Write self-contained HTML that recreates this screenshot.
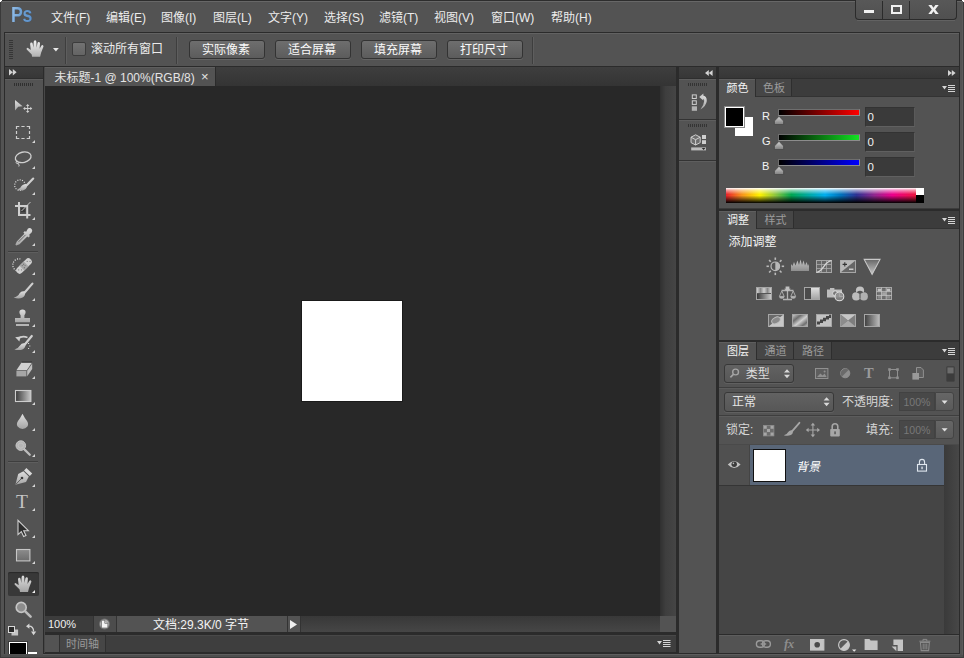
<!DOCTYPE html>
<html lang="zh-CN"><head><meta charset="utf-8"><title>Photoshop</title>
<style>
html,body{margin:0;padding:0;background:#535353;}
body{width:964px;height:658px;overflow:hidden;position:relative;font-family:"Liberation Sans","Noto Sans CJK SC",sans-serif;}
#app{position:absolute;left:0;top:0;width:964px;height:658px;overflow:hidden;background:#535353;}
#app div{position:absolute;box-sizing:border-box;}
.t{white-space:nowrap;}
svg.i{position:absolute;overflow:visible;}
</style></head><body>
<div id="app">
<div style="left:0px;top:0px;width:964px;height:658px;background:#535353;"></div>
<div style="left:0px;top:0px;width:964px;height:1px;background:#2d2d2d;"></div>
<div style="left:1px;top:1px;width:962px;height:1px;background:#676767;"></div>
<div style="left:0px;top:0px;width:1px;height:658px;background:#3a3a3a;"></div>
<div style="left:963px;top:0px;width:1px;height:658px;background:#3c3c3c;"></div>
<div style="left:962px;top:2px;width:1px;height:655px;background:#5a5a5a;"></div>
<div style="left:0px;top:657px;width:964px;height:1px;background:#3c3c3c;"></div>
<div style="left:1px;top:656px;width:962px;height:1px;background:#4c4c4c;"></div>
<div style="left:0px;top:0px;width:2px;height:1px;background:#fff;"></div>
<div style="left:0px;top:0px;width:1px;height:2px;background:#fff;"></div>
<div style="left:962px;top:0px;width:2px;height:1px;background:#fff;"></div>
<div style="left:963px;top:0px;width:1px;height:2px;background:#fff;"></div>
<div class="t" style="left:11.2px;top:1.6px;height:26px;line-height:26px;font-size:22.5px;font-weight:bold;letter-spacing:-0.3px;transform:scaleX(0.79);transform-origin:0 0;color:#74a3d3;background:linear-gradient(100deg,#9cc4ec 0%,#6fa0d2 45%,#5b8fc8 100%);-webkit-background-clip:text;background-clip:text;-webkit-text-fill-color:transparent;filter:drop-shadow(0 0 0.6px #2f4a6a);">Ps</div>
<div class="t" style="left:51px;top:9.7px;height:16px;line-height:16px;font-size:12px;color:#ececec;fill:#ececec;">文件(F)</div>
<div class="t" style="left:106px;top:9.7px;height:16px;line-height:16px;font-size:12px;color:#ececec;fill:#ececec;">编辑(E)</div>
<div class="t" style="left:161px;top:9.7px;height:16px;line-height:16px;font-size:12px;color:#ececec;fill:#ececec;">图像(I)</div>
<div class="t" style="left:213px;top:9.7px;height:16px;line-height:16px;font-size:12px;color:#ececec;fill:#ececec;">图层(L)</div>
<div class="t" style="left:268px;top:9.7px;height:16px;line-height:16px;font-size:12px;color:#ececec;fill:#ececec;">文字(Y)</div>
<div class="t" style="left:324px;top:9.7px;height:16px;line-height:16px;font-size:12px;color:#ececec;fill:#ececec;">选择(S)</div>
<div class="t" style="left:379px;top:9.7px;height:16px;line-height:16px;font-size:12px;color:#ececec;fill:#ececec;">滤镜(T)</div>
<div class="t" style="left:434px;top:9.7px;height:16px;line-height:16px;font-size:12px;color:#ececec;fill:#ececec;">视图(V)</div>
<div class="t" style="left:491px;top:9.7px;height:16px;line-height:16px;font-size:12px;color:#ececec;fill:#ececec;">窗口(W)</div>
<div class="t" style="left:551px;top:9.7px;height:16px;line-height:16px;font-size:12px;color:#ececec;fill:#ececec;">帮助(H)</div>
<div style="left:855px;top:0px;width:102px;height:20px;border:1px solid #2b2b2b;border-top:none;border-radius:0 0 4px 4px;background:linear-gradient(#585858,#505050);"></div>
<div style="left:857px;top:20px;width:98px;height:1px;background:#626262;"></div>
<div style="left:882px;top:1px;width:1px;height:18px;background:#2b2b2b;"></div>
<div style="left:909px;top:1px;width:1px;height:18px;background:#2b2b2b;"></div>
<div style="left:864px;top:10px;width:10px;height:3px;background:#f0f0f0;"></div>
<div style="left:891px;top:5px;width:11px;height:9px;border:2px solid #f0f0f0;"></div>
<svg class="i" style="left:928px;top:5px;" width="11" height="9" viewBox="0 0 11 9"><path d="M0.3 0H3.6L5.5 2.7L7.4 0H10.7L7.2 4.5L10.7 9H7.4L5.5 6.3L3.6 9H0.3L3.8 4.5Z" fill="#f0f0f0"/></svg>
<div style="left:4px;top:32px;width:956px;height:35px;border:1px solid #2b2b2b;background:#535353;"></div>
<div style="left:5px;top:33px;width:954px;height:1px;background:#626262;"></div>
<div style="left:9px;top:40px;width:4px;height:1px;background:#363636;"></div>
<div style="left:9px;top:42px;width:4px;height:1px;background:#363636;"></div>
<div style="left:9px;top:44px;width:4px;height:1px;background:#363636;"></div>
<div style="left:9px;top:46px;width:4px;height:1px;background:#363636;"></div>
<div style="left:9px;top:48px;width:4px;height:1px;background:#363636;"></div>
<div style="left:9px;top:50px;width:4px;height:1px;background:#363636;"></div>
<div style="left:9px;top:52px;width:4px;height:1px;background:#363636;"></div>
<div style="left:9px;top:54px;width:4px;height:1px;background:#363636;"></div>
<div style="left:9px;top:56px;width:4px;height:1px;background:#363636;"></div>
<div style="left:9px;top:58px;width:4px;height:1px;background:#363636;"></div>
<div style="left:65px;top:37px;width:1px;height:27px;background:#3e3e3e;"></div>
<div style="left:66px;top:37px;width:1px;height:27px;background:#5e5e5e;"></div>
<svg class="i" style="left:52.6px;top:48px;" width="6" height="4" viewBox="0 0 6 4"><path d="M0 0H5.8L2.9 3.4Z" fill="#e8e8e8"/></svg>
<div style="left:72px;top:42px;width:14px;height:14px;border:1px solid #3c3c3c;border-radius:2px;background:linear-gradient(#727272,#646464);"></div>
<div class="t" style="left:91px;top:41px;height:16px;line-height:16px;font-size:12px;color:#ececec;fill:#ececec;">滚动所有窗口</div>
<div style="left:176px;top:37px;width:1px;height:27px;background:#3e3e3e;"></div>
<div style="left:177px;top:37px;width:1px;height:27px;background:#5e5e5e;"></div>
<div style="left:189px;top:40px;width:76px;height:19px;border:1px solid #333;border-radius:3px;background:linear-gradient(#6e6e6e,#5c5c5c);box-shadow:0 1px 0 #636363;"></div>
<div class="t" style="left:188px;top:41.5px;height:16px;line-height:16px;font-size:12px;color:#fafafa;fill:#fafafa;width:76px;text-align:center;">实际像素</div>
<div style="left:275px;top:40px;width:76px;height:19px;border:1px solid #333;border-radius:3px;background:linear-gradient(#6e6e6e,#5c5c5c);box-shadow:0 1px 0 #636363;"></div>
<div class="t" style="left:274px;top:41.5px;height:16px;line-height:16px;font-size:12px;color:#fafafa;fill:#fafafa;width:76px;text-align:center;">适合屏幕</div>
<div style="left:361px;top:40px;width:76px;height:19px;border:1px solid #333;border-radius:3px;background:linear-gradient(#6e6e6e,#5c5c5c);box-shadow:0 1px 0 #636363;"></div>
<div class="t" style="left:360px;top:41.5px;height:16px;line-height:16px;font-size:12px;color:#fafafa;fill:#fafafa;width:76px;text-align:center;">填充屏幕</div>
<div style="left:447px;top:40px;width:76px;height:19px;border:1px solid #333;border-radius:3px;background:linear-gradient(#6e6e6e,#5c5c5c);box-shadow:0 1px 0 #636363;"></div>
<div class="t" style="left:446px;top:41.5px;height:16px;line-height:16px;font-size:12px;color:#fafafa;fill:#fafafa;width:76px;text-align:center;">打印尺寸</div>
<div style="left:532px;top:37px;width:1px;height:27px;background:#3e3e3e;"></div>
<div style="left:533px;top:37px;width:1px;height:27px;background:#5e5e5e;"></div>
<div style="left:4px;top:67px;width:1px;height:587px;background:#2b2b2b;"></div>
<div style="left:5px;top:67px;width:38px;height:12px;background:linear-gradient(#3e3e3e,#363636);"></div>
<div style="left:5px;top:78px;width:38px;height:1px;background:#2e2e2e;"></div>
<div style="left:5px;top:79px;width:38px;height:1px;background:#5e5e5e;"></div>
<svg class="i" style="left:9px;top:69.3px;" width="8" height="7" viewBox="0 0 8 7"><path d="M0 0L3.8 3.2L0 6.4ZM3.8 0L7.6 3.2L3.8 6.4Z" fill="#d4d4d4"/></svg>
<div style="left:14px;top:83px;width:1px;height:3px;background:#303030;"></div>
<div style="left:16px;top:83px;width:1px;height:3px;background:#303030;"></div>
<div style="left:18px;top:83px;width:1px;height:3px;background:#303030;"></div>
<div style="left:20px;top:83px;width:1px;height:3px;background:#303030;"></div>
<div style="left:22px;top:83px;width:1px;height:3px;background:#303030;"></div>
<div style="left:24px;top:83px;width:1px;height:3px;background:#303030;"></div>
<div style="left:26px;top:83px;width:1px;height:3px;background:#303030;"></div>
<div style="left:28px;top:83px;width:1px;height:3px;background:#303030;"></div>
<div style="left:30px;top:83px;width:1px;height:3px;background:#303030;"></div>
<div style="left:32px;top:83px;width:1px;height:3px;background:#303030;"></div>
<div style="left:43px;top:67px;width:1px;height:587px;background:#2b2b2b;"></div>
<div style="left:44px;top:67px;width:1px;height:587px;background:#484848;"></div>
<div style="left:8px;top:251px;width:30px;height:1px;background:#3e3e3e;"></div>
<div style="left:8px;top:252px;width:30px;height:1px;background:#5e5e5e;"></div>
<div style="left:8px;top:461px;width:30px;height:1px;background:#3e3e3e;"></div>
<div style="left:8px;top:462px;width:30px;height:1px;background:#5e5e5e;"></div>
<div style="left:8px;top:572px;width:31px;height:24px;background:#383838;border-radius:2px;box-shadow:inset 0 1px 1px #2a2a2a;"></div>
<div class="t" style="left:16px;top:491px;height:22px;line-height:22px;font-size:19.5px;color:#c4c4c4;font-family:'Liberation Serif',serif;">T</div>
<div style="left:28px;top:652px;width:9px;height:2px;background:#fff;"></div>
<div style="left:8px;top:641px;width:20px;height:13px;background:#3a3a3a;"></div>
<div style="left:9px;top:642px;width:18px;height:12px;background:#fff;"></div>
<div style="left:10px;top:643px;width:16px;height:11px;background:#000;"></div>
<div style="left:45px;top:67px;width:631px;height:19px;background:linear-gradient(#3e3e3e,#343434);"></div>
<div style="left:45px;top:67px;width:171px;height:19px;background:#535353;border-right:1px solid #2b2b2b;"></div>
<div style="left:45px;top:67px;width:170px;height:1px;background:#5e5e5e;"></div>
<div class="t" style="left:54.5px;top:69.9px;height:16px;line-height:16px;font-size:12px;color:#e4e4e4;fill:#e4e4e4;">未标题-1 @ 100%(RGB/8)</div>
<div class="t" style="left:201px;top:68.6px;height:16px;line-height:16px;font-size:13px;color:#e4e4e4;fill:#e4e4e4;">×</div>
<div style="left:45px;top:86px;width:615px;height:530px;background:#282828;"></div>
<div style="left:660px;top:86px;width:16px;height:530px;background:linear-gradient(90deg,#303030,#3e3e3e 35%,#454545);"></div>
<div style="left:660px;top:616px;width:16px;height:16px;background:#535353;"></div>
<div style="left:301px;top:300px;width:102px;height:102px;background:#1a1a1a;"></div>
<div style="left:302px;top:301px;width:100px;height:100px;background:#fff;"></div>
<div style="left:45px;top:616px;width:615px;height:16px;background:linear-gradient(#383838,#464646);"></div>
<div style="left:45px;top:616px;width:48px;height:16px;background:#3c3c3c;"></div>
<div class="t" style="left:48px;top:616px;height:16px;line-height:16px;font-size:11px;color:#f0f0f0;fill:#f0f0f0;">100%</div>
<div style="left:93px;top:616px;width:24px;height:16px;background:#4c4c4c;border-left:1px solid #333;border-right:1px solid #333;"></div>
<div style="left:117px;top:616px;width:170px;height:16px;background:#535353;"></div>
<div class="t" style="left:153px;top:616.9px;height:16px;line-height:16px;font-size:12px;color:#f4f4f4;fill:#f4f4f4;">文档:29.3K/0 字节</div>
<div style="left:287px;top:616px;width:14px;height:16px;background:#535353;border-left:1px solid #333;border-right:1px solid #333;"></div>
<svg class="i" style="left:290px;top:620px;" width="7" height="9" viewBox="0 0 7 9"><path d="M0 0L7 4.5L0 9Z" fill="#eee"/></svg>
<div style="left:676px;top:67px;width:3px;height:587px;background:#2b2b2b;"></div>
<div style="left:45px;top:632px;width:631px;height:3px;background:#2b2b2b;"></div>
<div style="left:45px;top:635px;width:631px;height:17px;background:#3e3e3e;"></div>
<div style="left:45px;top:635px;width:631px;height:1px;background:#484848;"></div>
<div style="left:45px;top:635px;width:14px;height:17px;background:#535353;"></div>
<div style="left:59px;top:635px;width:47px;height:17px;background:#464646;border-left:1px solid #303030;border-right:1px solid #303030;"></div>
<div class="t" style="left:66px;top:635.5px;height:16px;line-height:16px;font-size:11px;color:#9a9a9a;fill:#9a9a9a;">时间轴</div>
<svg class="i" style="left:657.4px;top:639.6px;" width="13" height="7" viewBox="0 0 13 7"><path d="M0 1H5L2.5 4.5ZM6 0H13.5V1H6ZM6 2H13.5V3H6ZM6 4H13.5V5H6ZM6 6H13.5V7H6Z" fill="#d4d4d4"/></svg>
<div style="left:45px;top:652px;width:631px;height:1px;background:#2b2b2b;"></div>
<div style="left:43px;top:653px;width:917px;height:1px;background:#2b2b2b;"></div>
<div style="left:43px;top:654px;width:917px;height:1px;background:#5e5e5e;"></div>
<div style="left:1px;top:655px;width:962px;height:2px;background:#4e4e4e;"></div>
<div style="left:679px;top:67px;width:37px;height:12px;background:linear-gradient(#3e3e3e,#363636);"></div>
<div style="left:679px;top:78px;width:37px;height:1px;background:#2e2e2e;"></div>
<svg class="i" style="left:704.8px;top:69.6px;" width="8" height="7" viewBox="0 0 8 7"><path d="M3.8 0L0 3L3.8 6ZM7.6 0L3.8 3L7.6 6Z" fill="#d4d4d4"/></svg>
<div style="left:679px;top:79px;width:37px;height:574px;background:#535353;"></div>
<div style="left:679px;top:79px;width:37px;height:1px;background:#5e5e5e;"></div>
<div style="left:679px;top:119px;width:37px;height:1px;background:#333;"></div>
<div style="left:679px;top:120px;width:37px;height:1px;background:#5e5e5e;"></div>
<div style="left:679px;top:160px;width:37px;height:1px;background:#333;"></div>
<div style="left:679px;top:161px;width:37px;height:1px;background:#5e5e5e;"></div>
<div style="left:688px;top:83px;width:1px;height:3px;background:#343434;"></div>
<div style="left:690px;top:83px;width:1px;height:3px;background:#343434;"></div>
<div style="left:692px;top:83px;width:1px;height:3px;background:#343434;"></div>
<div style="left:694px;top:83px;width:1px;height:3px;background:#343434;"></div>
<div style="left:696px;top:83px;width:1px;height:3px;background:#343434;"></div>
<div style="left:698px;top:83px;width:1px;height:3px;background:#343434;"></div>
<div style="left:700px;top:83px;width:1px;height:3px;background:#343434;"></div>
<div style="left:702px;top:83px;width:1px;height:3px;background:#343434;"></div>
<div style="left:704px;top:83px;width:1px;height:3px;background:#343434;"></div>
<div style="left:706px;top:83px;width:1px;height:3px;background:#343434;"></div>
<div style="left:688px;top:124px;width:1px;height:3px;background:#343434;"></div>
<div style="left:690px;top:124px;width:1px;height:3px;background:#343434;"></div>
<div style="left:692px;top:124px;width:1px;height:3px;background:#343434;"></div>
<div style="left:694px;top:124px;width:1px;height:3px;background:#343434;"></div>
<div style="left:696px;top:124px;width:1px;height:3px;background:#343434;"></div>
<div style="left:698px;top:124px;width:1px;height:3px;background:#343434;"></div>
<div style="left:700px;top:124px;width:1px;height:3px;background:#343434;"></div>
<div style="left:702px;top:124px;width:1px;height:3px;background:#343434;"></div>
<div style="left:704px;top:124px;width:1px;height:3px;background:#343434;"></div>
<div style="left:706px;top:124px;width:1px;height:3px;background:#343434;"></div>
<div style="left:716px;top:67px;width:3px;height:587px;background:#2b2b2b;"></div>
<div style="left:719px;top:67px;width:240px;height:12px;background:linear-gradient(#3e3e3e,#363636);"></div>
<div style="left:719px;top:78px;width:240px;height:1px;background:#2e2e2e;"></div>
<svg class="i" style="left:947.6px;top:69.6px;" width="8" height="7" viewBox="0 0 8 7"><path d="M0 0L3.8 3L0 6ZM3.8 0L7.6 3L3.8 6Z" fill="#d4d4d4"/></svg>
<div style="left:959px;top:67px;width:1px;height:587px;background:#2b2b2b;"></div>
<div style="left:719px;top:79px;width:240px;height:18px;background:#3c3c3c;"></div>
<div style="left:719px;top:96px;width:240px;height:1px;background:#333;"></div>
<div style="left:719px;top:79px;width:37px;height:18px;background:#535353;border-right:1px solid #2e2e2e;"></div>
<div style="left:719px;top:79px;width:36px;height:1px;background:#5e5e5e;"></div>
<div class="t" style="left:719px;top:80.2px;height:16px;line-height:16px;font-size:11px;color:#f4f4f4;fill:#f4f4f4;width:37px;text-align:center;">颜色</div>
<div style="left:756px;top:79px;width:36px;height:17px;background:#464646;border-right:1px solid #2e2e2e;"></div>
<div class="t" style="left:756px;top:80.2px;height:16px;line-height:16px;font-size:11px;color:#9c9c9c;fill:#9c9c9c;width:36px;text-align:center;">色板</div>
<svg class="i" style="left:942px;top:85px;" width="13" height="7" viewBox="0 0 13 7"><path d="M0 1H5L2.5 4.5ZM6 0H13V1H6ZM6 2H13V3H6ZM6 4H13V5H6ZM6 6H13V7H6Z" fill="#d4d4d4"/></svg>
<div style="left:719px;top:97px;width:240px;height:112px;background:#535353;"></div>
<div style="left:735px;top:117px;width:18px;height:19px;background:#fff;"></div>
<div style="left:724px;top:106px;width:21px;height:22px;border:1px solid #8a8a8a;background:#fff;"></div>
<div style="left:726px;top:108px;width:17px;height:18px;background:#000;"></div>
<div class="t" style="left:762px;top:107.6px;height:16px;line-height:16px;font-size:11px;color:#f4f4f4;fill:#f4f4f4;">R</div>
<div style="left:778px;top:108.6px;width:81.6px;height:7px;border:1px solid #8c8c8c;border-top-color:#6e6e6e;border-left-color:#6e6e6e;background:linear-gradient(90deg,#000,#f00);"></div>
<svg class="i" style="left:774px;top:115.7px;" width="10" height="9" viewBox="0 0 10 9"><path d="M5 0.3L9.6 5V8.5H0.4V5Z" fill="url(#ig2)" stroke="#484848" stroke-width="0.8"/></svg>
<div style="left:865px;top:107px;width:50px;height:20px;background:#3a3a3a;border:1px solid #333;border-bottom-color:#606060;border-right-color:#5a5a5a;"></div>
<div class="t" style="left:867.6px;top:109.3px;height:16px;line-height:16px;font-size:11.5px;color:#f2f2f2;fill:#f2f2f2;">0</div>
<div class="t" style="left:762px;top:132.6px;height:16px;line-height:16px;font-size:11px;color:#f4f4f4;fill:#f4f4f4;">G</div>
<div style="left:778px;top:133.6px;width:81.6px;height:7px;border:1px solid #8c8c8c;border-top-color:#6e6e6e;border-left-color:#6e6e6e;background:linear-gradient(90deg,#000,#12e222);"></div>
<svg class="i" style="left:774px;top:140.7px;" width="10" height="9" viewBox="0 0 10 9"><path d="M5 0.3L9.6 5V8.5H0.4V5Z" fill="url(#ig2)" stroke="#484848" stroke-width="0.8"/></svg>
<div style="left:865px;top:132px;width:50px;height:20px;background:#3a3a3a;border:1px solid #333;border-bottom-color:#606060;border-right-color:#5a5a5a;"></div>
<div class="t" style="left:867.6px;top:134.3px;height:16px;line-height:16px;font-size:11.5px;color:#f2f2f2;fill:#f2f2f2;">0</div>
<div class="t" style="left:762px;top:157.6px;height:16px;line-height:16px;font-size:11px;color:#f4f4f4;fill:#f4f4f4;">B</div>
<div style="left:778px;top:158.6px;width:81.6px;height:7px;border:1px solid #8c8c8c;border-top-color:#6e6e6e;border-left-color:#6e6e6e;background:linear-gradient(90deg,#000,#00f);"></div>
<svg class="i" style="left:774px;top:165.7px;" width="10" height="9" viewBox="0 0 10 9"><path d="M5 0.3L9.6 5V8.5H0.4V5Z" fill="url(#ig2)" stroke="#484848" stroke-width="0.8"/></svg>
<div style="left:865px;top:157px;width:50px;height:20px;background:#3a3a3a;border:1px solid #333;border-bottom-color:#606060;border-right-color:#5a5a5a;"></div>
<div class="t" style="left:867.6px;top:159.3px;height:16px;line-height:16px;font-size:11.5px;color:#f2f2f2;fill:#f2f2f2;">0</div>
<div style="left:726px;top:188px;width:198px;height:15px;background:linear-gradient(180deg,#fff 0%,rgba(255,255,255,.55) 14%,rgba(255,255,255,0) 42%,rgba(0,0,0,0) 50%,rgba(0,0,0,.6) 80%,#000 100%),linear-gradient(90deg,#e8202a 0%,#f7941d 8%,#fff200 17%,#8dc63f 25%,#00a651 33%,#00a99d 41%,#00aeef 50%,#0072bc 58%,#2e3192 66%,#92278f 75%,#ec008c 84%,#ed1c24 100%);"></div>
<div style="left:916px;top:188px;width:8px;height:7px;background:#fff;"></div>
<div style="left:916px;top:195px;width:8px;height:8px;background:#000;"></div>
<div style="left:719px;top:208px;width:240px;height:1px;background:#3c3c3c;"></div>
<div style="left:719px;top:209px;width:240px;height:2px;background:#2b2b2b;"></div>
<div style="left:719px;top:211px;width:240px;height:18px;background:#3c3c3c;"></div>
<div style="left:719px;top:228px;width:240px;height:1px;background:#333;"></div>
<div style="left:719px;top:211px;width:38px;height:18px;background:#535353;border-right:1px solid #2e2e2e;"></div>
<div style="left:719px;top:211px;width:37px;height:1px;background:#5e5e5e;"></div>
<div class="t" style="left:719px;top:212.2px;height:16px;line-height:16px;font-size:11px;color:#f4f4f4;fill:#f4f4f4;width:38px;text-align:center;">调整</div>
<div style="left:757px;top:211px;width:37px;height:17px;background:#464646;border-right:1px solid #2e2e2e;"></div>
<div class="t" style="left:757px;top:212.2px;height:16px;line-height:16px;font-size:11px;color:#9c9c9c;fill:#9c9c9c;width:37px;text-align:center;">样式</div>
<svg class="i" style="left:942px;top:217px;" width="13" height="7" viewBox="0 0 13 7"><path d="M0 1H5L2.5 4.5ZM6 0H13V1H6ZM6 2H13V3H6ZM6 4H13V5H6ZM6 6H13V7H6Z" fill="#d4d4d4"/></svg>
<div style="left:719px;top:229px;width:240px;height:111px;background:#535353;"></div>
<div class="t" style="left:728.5px;top:233.8px;height:16px;line-height:16px;font-size:12px;color:#f4f4f4;fill:#f4f4f4;">添加调整</div>
<div style="left:719px;top:340px;width:240px;height:2px;background:#2b2b2b;"></div>
<div style="left:719px;top:342px;width:240px;height:18px;background:#3c3c3c;"></div>
<div style="left:719px;top:359px;width:240px;height:1px;background:#333;"></div>
<div style="left:719px;top:342px;width:38px;height:18px;background:#535353;border-right:1px solid #2e2e2e;"></div>
<div style="left:719px;top:342px;width:37px;height:1px;background:#5e5e5e;"></div>
<div class="t" style="left:719px;top:343.2px;height:16px;line-height:16px;font-size:11px;color:#f4f4f4;fill:#f4f4f4;width:38px;text-align:center;">图层</div>
<div style="left:757px;top:342px;width:37px;height:17px;background:#464646;border-right:1px solid #2e2e2e;"></div>
<div class="t" style="left:757px;top:343.2px;height:16px;line-height:16px;font-size:11px;color:#9c9c9c;fill:#9c9c9c;width:37px;text-align:center;">通道</div>
<div style="left:794px;top:342px;width:38px;height:17px;background:#464646;border-right:1px solid #2e2e2e;"></div>
<div class="t" style="left:794px;top:343.2px;height:16px;line-height:16px;font-size:11px;color:#9c9c9c;fill:#9c9c9c;width:38px;text-align:center;">路径</div>
<svg class="i" style="left:942px;top:348px;" width="13" height="7" viewBox="0 0 13 7"><path d="M0 1H5L2.5 4.5ZM6 0H13V1H6ZM6 2H13V3H6ZM6 4H13V5H6ZM6 6H13V7H6Z" fill="#d4d4d4"/></svg>
<div style="left:719px;top:360px;width:240px;height:85px;background:#535353;"></div>
<div style="left:724px;top:364px;width:70px;height:19px;border:1px solid #383838;border-radius:3px;background:linear-gradient(#626262,#575757);box-shadow:0 1px 0 #606060;"></div>
<div class="t" style="left:745.7px;top:366px;height:16px;line-height:16px;font-size:12px;color:#dcdcdc;fill:#dcdcdc;">类型</div>
<div style="left:719px;top:387px;width:240px;height:1px;background:#3e3e3e;"></div>
<div style="left:719px;top:388px;width:240px;height:1px;background:#5c5c5c;"></div>
<div style="left:724px;top:392px;width:110px;height:20px;border:1px solid #383838;border-radius:3px;background:linear-gradient(#626262,#575757);box-shadow:0 1px 0 #606060;"></div>
<div class="t" style="left:732px;top:394px;height:16px;line-height:16px;font-size:12px;color:#e4e4e4;fill:#e4e4e4;">正常</div>
<div class="t" style="left:842px;top:394px;height:16px;line-height:16px;font-size:12px;color:#d6d6d6;fill:#d6d6d6;">不透明度:</div>
<div style="left:899px;top:392px;width:36px;height:19px;background:#484848;border:1px solid #424242;"></div>
<div class="t" style="left:903.5px;top:394.3px;height:16px;line-height:16px;font-size:10.5px;color:#787878;fill:#787878;">100%</div>
<div style="left:935px;top:392px;width:19px;height:19px;border:1px solid #444;border-radius:0 3px 3px 0;background:linear-gradient(#666,#5a5a5a);"></div>
<div style="left:719px;top:415px;width:240px;height:1px;background:#3e3e3e;"></div>
<div style="left:719px;top:416px;width:240px;height:1px;background:#5c5c5c;"></div>
<div class="t" style="left:726px;top:422px;height:16px;line-height:16px;font-size:12px;color:#d6d6d6;fill:#d6d6d6;">锁定:</div>
<div class="t" style="left:866px;top:422px;height:16px;line-height:16px;font-size:12px;color:#d6d6d6;fill:#d6d6d6;">填充:</div>
<div style="left:899px;top:420px;width:36px;height:19px;background:#484848;border:1px solid #424242;"></div>
<div class="t" style="left:903.5px;top:422.3px;height:16px;line-height:16px;font-size:10.5px;color:#787878;fill:#787878;">100%</div>
<div style="left:935px;top:420px;width:19px;height:19px;border:1px solid #444;border-radius:0 3px 3px 0;background:linear-gradient(#666,#5a5a5a);"></div>
<div style="left:719px;top:444px;width:240px;height:1px;background:#4a4a4a;"></div>
<div style="left:719px;top:445px;width:240px;height:189px;background:#454545;"></div>
<div style="left:944px;top:445px;width:15px;height:189px;background:linear-gradient(90deg,#3a3a3a,#474747);"></div>
<div style="left:719px;top:445px;width:225px;height:40px;background:#596678;"></div>
<div style="left:719px;top:445px;width:31px;height:40px;background:#505050;border-right:1px solid #444;"></div>
<div style="left:719px;top:485px;width:225px;height:1px;background:#353535;"></div>
<div style="left:753px;top:449px;width:33px;height:33px;background:#fff;border:1px solid #111;"></div>
<div class="t" style="left:797px;top:459px;height:16px;line-height:16px;font-size:12px;color:#fff;fill:#fff;"><span style="display:inline-block;transform:skewX(-12deg);">背景</span></div>
<div style="left:719px;top:634px;width:240px;height:1px;background:#2b2b2b;"></div>
<div style="left:719px;top:635px;width:240px;height:1px;background:#5e5e5e;"></div>
<div style="left:719px;top:636px;width:240px;height:17px;background:#535353;"></div>
<div class="t" style="left:784px;top:636px;height:16px;line-height:16px;font-size:13px;color:#8c8c8c;fill:#8c8c8c;font-family:'Liberation Serif',serif;font-style:italic;font-weight:bold;letter-spacing:-0.5px;">fx</div>
<svg class="i" style="left:0;top:0" width="964" height="658" viewBox="0 0 964 658"><defs>
<linearGradient id="ig" x1="0" y1="0" x2="0" y2="1"><stop offset="0" stop-color="#dedede"/><stop offset="1" stop-color="#a4a4a4"/></linearGradient>
<linearGradient id="gh" x1="0" y1="0" x2="1" y2="0"><stop offset="0" stop-color="#3a3a3a"/><stop offset="1" stop-color="#c8c8c8"/></linearGradient>
<linearGradient id="gh2" x1="0" y1="0" x2="1" y2="0"><stop offset="0" stop-color="#3e3e3e"/><stop offset="1" stop-color="#bdbdbd"/></linearGradient>
<linearGradient id="gr" x1="0" y1="0" x2="0" y2="1"><stop offset="0" stop-color="#8c8c8c"/><stop offset="1" stop-color="#6c6c6c"/></linearGradient>
<linearGradient id="gd" x1="0" y1="0" x2="0" y2="1"><stop offset="0" stop-color="#b8b8b8"/><stop offset="0.45" stop-color="#b0b0b0"/><stop offset="0.5" stop-color="#3c3c3c"/><stop offset="1" stop-color="#b4b4b4"/></linearGradient>
<linearGradient id="gv" x1="0" y1="0" x2="0" y2="1"><stop offset="0" stop-color="#666"/><stop offset="1" stop-color="#c8c8c8"/></linearGradient>
<linearGradient id="gstripe" x1="0" y1="0" x2="1" y2="0"><stop offset="0" stop-color="#d0d0d0"/><stop offset="0.25" stop-color="#888"/><stop offset="0.5" stop-color="#d0d0d0"/><stop offset="0.75" stop-color="#888"/><stop offset="1" stop-color="#d0d0d0"/></linearGradient>
<linearGradient id="gdiag" x1="0" y1="0" x2="1" y2="1"><stop offset="0" stop-color="#d0d0d0"/><stop offset="0.3" stop-color="#6e6e6e"/><stop offset="0.55" stop-color="#cfcfcf"/><stop offset="0.8" stop-color="#707070"/><stop offset="1" stop-color="#c8c8c8"/></linearGradient>
<linearGradient id="iga" x1="0" y1="0" x2="0" y2="1"><stop offset="0" stop-color="#c6c6c6"/><stop offset="1" stop-color="#8e8e8e"/></linearGradient>
<linearGradient id="igh" x1="0" y1="0" x2="0" y2="1"><stop offset="0" stop-color="#f2f2f2"/><stop offset="1" stop-color="#b0b0b0"/></linearGradient>
<linearGradient id="ig2" x1="0" y1="0" x2="0" y2="1"><stop offset="0" stop-color="#d6d6d6"/><stop offset="1" stop-color="#7e7e7e"/></linearGradient>
<radialGradient id="glow"><stop offset="0" stop-color="#fff"/><stop offset="0.6" stop-color="#e8e8e8" stop-opacity="0.8"/><stop offset="1" stop-color="#999" stop-opacity="0"/></radialGradient>
</defs><g transform="translate(26.4,40.2) scale(1.0) translate(-14.3,-575.4)"><path d="M20 592L19.6 589.6L14.6 584.6Q14 583.2 15.6 583L18.7 585.2L18 579.2Q18.2 577.8 19.3 577.8Q20.4 577.8 20.6 579L21.3 583L21.6 577Q21.8 575.5 23 575.5Q24.2 575.5 24.3 577L24.5 583L25.4 578.3Q25.8 577 26.9 577.2Q28 577.4 27.9 578.8L27.5 584L29.2 581Q29.9 580 30.8 580.4Q31.7 580.9 31.3 582L29 588L28 592Z" fill="url(#igh)"/></g><path d="M15 100L22.6 106.3L18.2 106.7L15 110.6Z" fill="url(#ig)"/><path d="M27.7 105V112M24.2 108.5H31.2" stroke="#cfcfcf" stroke-width="1" fill="none"/><path d="M27.7 103.9L29.4 106H26ZM27.7 113.1L29.4 111H26ZM23.1 108.5L25.2 106.8V110.2ZM32.3 108.5L30.2 106.8V110.2Z" fill="#cfcfcf"/><path d="M16.5 129V126.5H19.3M21.4 126.5H24.6M26.7 126.5H29.5V129M29.5 131V134M29.5 136V138.5H26.7M24.6 138.5H21.4M19.3 138.5H16.5V136M16.5 134V131" stroke="#cfcfcf" stroke-width="1.2" fill="none"/><path d="M35 140V143H32Z" fill="#d6d6d6"/><ellipse cx="23.2" cy="157.3" rx="8" ry="5.2" transform="rotate(-14 23.2 157.3)" stroke="#cfcfcf" stroke-width="1.3" fill="none"/><path d="M17.3 160.8Q15.2 162.5 16.8 163.6Q18.8 164.3 19 162.2M18.3 163.8Q19.8 165 18.8 166.5" stroke="#cfcfcf" stroke-width="1" fill="none"/><path d="M35 166V169H32Z" fill="#d6d6d6"/><circle cx="20" cy="185.2" r="5.3" stroke="#e0e0e0" stroke-width="1.2" stroke-dasharray="1 1.4" fill="none"/><path d="M33.2 178.6L26.5 185.5" stroke="#cfcfcf" stroke-width="2.2" stroke-linecap="round"/><path d="M26.8 184.6Q27.8 188.5 24 190Q20.5 191 17.2 189.5Q20.5 188.8 21.5 186Q23.5 183.5 26.8 184.6Z" fill="url(#ig)"/><path d="M35 192V195H32Z" fill="#d6d6d6"/><path d="M19 202V215H30.5M15 206H27.2V218.5" stroke="#cfcfcf" stroke-width="2" fill="none"/><rect x="21" y="208" width="4.2" height="4.2" fill="#3a3a3a"/><path d="M30.5 202L21.5 211" stroke="#cfcfcf" stroke-width="0.9"/><path d="M35 217V220H32Z" fill="#d6d6d6"/><path d="M28 228.6Q30 227.3 31.6 229Q33 230.8 31.6 232.6L29 235L30 236L28.4 237.6L27.3 236.6L19.5 244.2L16.2 245.4L15.4 244.6L16.8 241.4L24.4 233.7L23.4 232.6L25 231L26 232Z" fill="url(#ig)"/><path d="M25.6 234.8L18.6 241.8" stroke="#666" stroke-width="1"/><path d="M35 243V246H32Z" fill="#d6d6d6"/><path d="M20.4 259A6.2 6.2 0 0 0 16.7 270.8" stroke="#e6e6e6" stroke-width="1.2" stroke-dasharray="1 1.4" fill="none"/><g transform="rotate(-45 24 266)"><rect x="14.5" y="262.6" width="19" height="6.8" rx="3.2" fill="#cfcfcf"/><rect x="21" y="262.6" width="6" height="6.8" fill="#a8a8a8"/><path d="M17 265h1M19 267h1M29 265h1M31 267h1M22.5 264.5h1M24.5 266.5h1M22.5 267.5h1M24.5 264.5h1" stroke="#6a6a6a" stroke-width="1"/></g><path d="M35 272V275H32Z" fill="#d6d6d6"/><path d="M32.4 283.6L24 293.2" stroke="#cfcfcf" stroke-width="2.2" stroke-linecap="round"/><path d="M24.8 291.6Q26 295.6 22.6 297.6Q18.6 299.4 13.6 297.6Q18 296.6 19.4 293.6Q21.6 290.4 24.8 291.6Z" fill="url(#ig)"/><path d="M35 298V301H32Z" fill="#d6d6d6"/><path d="M22.5 309.5Q25.6 309.5 25.6 312.3Q25.6 314 24.4 315.2V318H30V322.3H15V318H20.6V315.2Q19.4 314 19.4 312.3Q19.4 309.5 22.5 309.5Z" fill="url(#ig)"/><path d="M16 325H29" stroke="#cfcfcf" stroke-width="1.6"/><path d="M35 324V327H32Z" fill="#d6d6d6"/><path d="M31.8 336L24.4 345" stroke="#cfcfcf" stroke-width="2.2" stroke-linecap="round"/><path d="M25.2 343.6Q26.2 347.4 23 349.2Q19.2 350.8 14.4 349.4Q18.6 348.4 20 345.6Q22 342.6 25.2 343.6Z" fill="url(#ig)"/><path d="M27.5 337.4Q22 335.4 18 338.6" stroke="#cfcfcf" stroke-width="1.6" fill="none"/><path d="M15.2 337.2L20.6 336.4L19.4 341.4Z" fill="#cfcfcf"/><path d="M28.6 343v1M29.8 345.5v1M28.6 348v1" stroke="#e0e0e0" stroke-width="1"/><path d="M35 350V353H32Z" fill="#d6d6d6"/><path d="M21.6 362.6H32L26.8 370.2H16.4Z" fill="#d0d0d0"/><path d="M16.4 371H26.4V376.4H16.4Z" fill="#a6a6a6"/><path d="M27.2 370.8L32.2 363.6V369L27.2 376.2Z" fill="#bebebe"/><path d="M21.6 362.1H32" stroke="#2e2e2e" stroke-width="1"/><path d="M35 376V379H32Z" fill="#d6d6d6"/><rect x="15.5" y="390.5" width="15.4" height="11" fill="url(#gh)" stroke="#cdcdcd" stroke-width="1.1"/><path d="M35 402V405H32Z" fill="#d6d6d6"/><path d="M22.5 413.8Q24.6 418 27 421Q29 424 27.4 426.6Q25.6 429 22.5 429Q19.4 429 17.6 426.6Q16 424 18 421Q20.4 418 22.5 413.8Z" fill="url(#ig)"/><path d="M35 428V431H32Z" fill="#d6d6d6"/><circle cx="20.8" cy="445.6" r="4.8" fill="#b4b4b4" stroke="#c8c8c8" stroke-width="1"/><circle cx="20.8" cy="445.6" r="2.6" fill="none" stroke="#c4c4c4" stroke-width="0.8"/><path d="M24.6 449.6L29.8 454.8" stroke="#bdbdbd" stroke-width="2.2" stroke-linecap="round"/><path d="M35 454V457H32Z" fill="#d6d6d6"/><path d="M26.4 468L32.2 473.6L29.8 476L24 470.4Z" fill="#d8d8d8"/><path d="M23.4 471.2L28.8 476.6L26 482L15.4 484.8L18.2 474Z" fill="url(#ig)"/><path d="M15.8 484.4L21.6 478.4" stroke="#555" stroke-width="0.9"/><circle cx="22" cy="478" r="1.3" fill="#3a3a3a"/><path d="M35 484V487H32Z" fill="#d6d6d6"/><path d="M35 508V511H32Z" fill="#d6d6d6"/><path d="M18 520.4V534.6L21.3 531.6L23.6 536.6L26 535.5L23.7 530.7H28.4Z" fill="#2c2c2c" stroke="#cfcfcf" stroke-width="1.1" stroke-linejoin="miter"/><path d="M35 535V538H32Z" fill="#d6d6d6"/><rect x="16.5" y="549.5" width="13.4" height="11.4" fill="url(#gr)" stroke="#c6c6c6" stroke-width="1.1"/><path d="M35 561V564H32Z" fill="#d6d6d6"/><g transform="translate(14.3,575.4) scale(1.0) translate(-14.3,-575.4)"><path d="M20 592L19.6 589.6L14.6 584.6Q14 583.2 15.6 583L18.7 585.2L18 579.2Q18.2 577.8 19.3 577.8Q20.4 577.8 20.6 579L21.3 583L21.6 577Q21.8 575.5 23 575.5Q24.2 575.5 24.3 577L24.5 583L25.4 578.3Q25.8 577 26.9 577.2Q28 577.4 27.9 578.8L27.5 584L29.2 581Q29.9 580 30.8 580.4Q31.7 580.9 31.3 582L29 588L28 592Z" fill="url(#ig)"/></g><path d="M35 590V593H32Z" fill="#f0f0f0"/><circle cx="21.2" cy="607.4" r="5" fill="#8d8d8d" stroke="#c6c6c6" stroke-width="1.6"/><path d="M25.2 611.4L30.6 616.6" stroke="#bcbcbc" stroke-width="2.6" stroke-linecap="round"/><rect x="11.5" y="629.5" width="6.6" height="6" fill="#c4c4c4"/><rect x="8.5" y="626.5" width="6" height="6" fill="#2a2a2a" stroke="#d8d8d8" stroke-width="1"/><path d="M28.6 626.2Q33.6 626 33.6 631.6" stroke="#d4d4d4" stroke-width="1.3" fill="none"/><path d="M26 626.2L29.4 623.6V628.8ZM33.6 635.2L31 631.6H36.2Z" fill="#d4d4d4"/><circle cx="104.5" cy="624" r="6" fill="url(#glow)"/><path d="M101.5 620.3H104.8L107.8 623.3V628H101.5Z" fill="#f4f4f4" stroke="#666" stroke-width="0.7"/><path d="M104.8 620.3V623.3H107.8" fill="none" stroke="#555" stroke-width="0.7"/><rect x="692.3" y="94.9" width="4" height="3.6" fill="none" stroke="#cfcfcf" stroke-width="1"/><rect x="692.3" y="100.8" width="4" height="3.6" fill="none" stroke="#cfcfcf" stroke-width="1"/><rect x="691.8" y="106.3" width="5.2" height="4.5" fill="#b2b2b2"/><path d="M702.6 95.5Q707 95.8 706.8 101Q706.2 106.2 700.4 109.4Q704 105 704.2 101Q704.4 98.8 702.6 98.4Z" fill="url(#ig)"/><path d="M699.2 97L703.4 93.6V100.4Z" fill="#cfcfcf"/><path d="M695.6 134.8L700.2 137.2V142.6L695.6 145L691 142.6V137.2Z" fill="#6e6e6e" stroke="#cfcfcf" stroke-width="1" stroke-linejoin="round"/><path d="M691 137.2L695.6 139.7L700.2 137.2M695.6 139.7V145" stroke="#cfcfcf" stroke-width="1" fill="none"/><rect x="702" y="135" width="4" height="4" fill="#cfcfcf"/><rect x="702" y="140.2" width="4" height="3.8" fill="#cfcfcf"/><rect x="691.2" y="147.4" width="14.8" height="3" fill="#bdbdbd"/><path d="M701.8 147.9H705.4L703.6 150Z" fill="#2a2a2a"/><circle cx="775.3" cy="266.3" r="4.3" fill="none" stroke="#bababa" stroke-width="1.2"/><path d="M775.3 262.0A4.3 4.3 0 0 1 775.3 270.6Z" fill="#b8b8b8"/><path d="M781.7 266.3L784.1 266.3" stroke="#bababa" stroke-width="1.6"/><path d="M779.8 270.8L781.5 272.5" stroke="#bababa" stroke-width="1.6"/><path d="M775.3 272.7L775.3 275.1" stroke="#bababa" stroke-width="1.6"/><path d="M770.8 270.8L769.1 272.5" stroke="#bababa" stroke-width="1.6"/><path d="M768.9 266.3L766.5 266.3" stroke="#bababa" stroke-width="1.6"/><path d="M770.8 261.8L769.1 260.1" stroke="#bababa" stroke-width="1.6"/><path d="M775.3 259.9L775.3 257.5" stroke="#bababa" stroke-width="1.6"/><path d="M779.8 261.8L781.5 260.1" stroke="#bababa" stroke-width="1.6"/><path d="M791 271V264L792.5 266L794 262L795.5 265.5L797.5 260.5L799 265L800.5 259.5L802 265L803.5 260.5L805 265.5L806.5 262L808 266L809 264V271Z" fill="url(#iga)"/><rect x="816.5" y="260.5" width="15" height="12" fill="#666" stroke="#a6a6a6" stroke-width="1"/><path d="M816 264.5H832M816 268.5H832M821.5 260V273M826.5 260V273" stroke="#a8a8a8" stroke-width="0.8"/><path d="M816.5 272.4C823 272.4 824.5 260.8 831.5 260.6" stroke="#d8d8d8" stroke-width="1.3" fill="none"/><rect x="840.5" y="260.5" width="15" height="12" fill="#666" stroke="#a6a6a6" stroke-width="1"/><path d="M840.5 272.5L855.5 260.5H840.5Z" fill="#b8b8b8"/><path d="M842.6 264.4H847M844.8 262.2V266.6" stroke="#333" stroke-width="1.1"/><path d="M849 269.2H853.4" stroke="#e4e4e4" stroke-width="1.2"/><path d="M864.2 259.4H880L872.1 274.4Z" fill="url(#gv)" stroke="#c9c9c9" stroke-width="1.1"/><rect x="756.5" y="287.5" width="15" height="12" fill="#555" stroke="#a6a6a6" stroke-width="1"/><rect x="757" y="288" width="14" height="5" fill="url(#gstripe)"/><rect x="757" y="294" width="14" height="5" fill="url(#gh)"/><path d="M787.5 287V299M781.5 290.5H793.5M783 299.5H792" stroke="#b2b2b2" stroke-width="1.3" fill="none"/><path d="M785.6 286.4H789.4V288.8H791L787.5 291.6L784 288.8H785.6Z" fill="#c0c0c0"/><path d="M781.8 291L779.4 296.4H784.2ZM793.2 291L790.8 296.4H795.6Z" stroke="#b2b2b2" stroke-width="0.9" fill="none"/><path d="M779 296.4H784.6Q784.4 298.8 781.8 298.8Q779.2 298.8 779 296.4ZM790.4 296.4H796Q795.8 298.8 793.2 298.8Q790.6 298.8 790.4 296.4Z" fill="#b2b2b2"/><rect x="804.5" y="287.5" width="15" height="12" fill="#4a4a4a" stroke="#a6a6a6" stroke-width="1"/><rect x="811" y="288" width="8" height="11" fill="url(#ig)"/><path d="M827 289.4H830V288H834.4V289.4H842V297.4H827Z" fill="#bdbdbd"/><circle cx="835.2" cy="293.4" r="2.6" fill="#777" stroke="#e2e2e2" stroke-width="0.9"/><circle cx="839.4" cy="296.4" r="4.4" fill="#8a8a8a" fill-opacity="0.85" stroke="#dedede" stroke-width="1.1"/><path d="M839.4 292V296.4H843.8" stroke="#b8b8b8" stroke-width="0.7" fill="none"/><circle cx="860" cy="290.6" r="4.1" fill="#c2c2c2"/><circle cx="856.2" cy="296.4" r="4.1" fill="#bcbcbc"/><circle cx="863.8" cy="296.4" r="4.1" fill="#b0b0b0"/><path d="M860 293.4L857.6 292.2Q860 290.6 862.4 292.2ZM860 293.6V298.6" stroke="#555" stroke-width="1.1" fill="#555"/><rect x="876.5" y="287.5" width="15" height="12" fill="#5c5c5c" stroke="#a6a6a6" stroke-width="1"/><rect x="877.6" y="288.6" width="3.6" height="2.7" fill="#c2c2c2"/><rect x="882.2" y="288.6" width="3.6" height="2.7" fill="#6e6e6e"/><rect x="886.8" y="288.6" width="3.6" height="2.7" fill="#c2c2c2"/><rect x="877.6" y="292.3" width="3.6" height="2.7" fill="#6e6e6e"/><rect x="882.2" y="292.3" width="3.6" height="2.7" fill="#a4a4a4"/><rect x="886.8" y="292.3" width="3.6" height="2.7" fill="#6e6e6e"/><rect x="877.6" y="296.0" width="3.6" height="2.7" fill="#8a8a8a"/><rect x="882.2" y="296.0" width="3.6" height="2.7" fill="#6e6e6e"/><rect x="886.8" y="296.0" width="3.6" height="2.7" fill="#8a8a8a"/><path d="M881.6 287.5V299.5M886.2 287.5V299.5M876.5 291.7H891.5M876.5 295.4H891.5" stroke="#c4c4c4" stroke-width="0.9"/><rect x="768.5" y="314.5" width="15" height="12" fill="#6a6a6a" stroke="#a6a6a6" stroke-width="1"/><path d="M768.5 326.5L783.5 314.5V326.5Z" fill="#c8c8c8"/><ellipse cx="776" cy="320.4" rx="4.6" ry="3" transform="rotate(-30 776 320.4)" fill="#8a8a8a" stroke="#c0c0c0" stroke-width="0.9"/><rect x="792.5" y="314.5" width="15" height="12" fill="url(#gdiag)" stroke="#a6a6a6" stroke-width="1"/><rect x="816.5" y="314.5" width="15" height="12" fill="#c2c2c2" stroke="#a6a6a6" stroke-width="1"/><path d="M817 324.6V321.4H820V319.6H823V317.8H826V316H829V314.8H831V318H829V319.4H826V321.2H823V323H820V324.6Z" fill="#454545"/><rect x="840.5" y="314.5" width="15" height="12" fill="#7e7e7e" stroke="#a6a6a6" stroke-width="1"/><path d="M840.5 314.5L848 320.5L855.5 314.5Z" fill="#c6c6c6"/><path d="M840.5 326.5L848 320.5L855.5 326.5Z" fill="#a8a8a8"/><path d="M840.5 314.5L848 320.5L840.5 326.5Z" fill="#8c8c8c"/><rect x="864.5" y="314.5" width="15" height="12" fill="url(#gh2)" stroke="#a6a6a6" stroke-width="1"/><circle cx="735.6" cy="372" r="2.9" fill="none" stroke="#a4a4a4" stroke-width="1.4"/><path d="M733.4 374.4L730.4 377.4" stroke="#a4a4a4" stroke-width="1.6"/><path d="M784 372.59999999999997L787 369.2L790 372.59999999999997ZM784 374.8L787 378.2L790 374.8Z" fill="#d8d8d8"/><path d="M823.6 400.59999999999997L826.6 397.2L829.6 400.59999999999997ZM823.6 402.8L826.6 406.2L829.6 402.8Z" fill="#d8d8d8"/><rect x="815.5" y="368.5" width="12.4" height="10" fill="#5e5e5e" stroke="#909090" stroke-width="1"/><path d="M817 377L820.4 373.4L822.6 375.4L824.6 373.6L826.6 377Z" fill="#909090"/><circle cx="824.6" cy="371.4" r="1" fill="#909090"/><circle cx="845.2" cy="373.2" r="4.6" fill="#8e8e8e" stroke="#909090" stroke-width="1"/><path d="M848.5 370A4.6 4.6 0 0 0 842 376.5Z" fill="#6a6a6a"/><path d="M889.5 369.5H897.5V377.8H889.5Z" fill="none" stroke="#909090" stroke-width="1"/><rect x="888.2" y="368.2" width="2.6" height="2.6" fill="#909090"/><rect x="896.2" y="368.2" width="2.6" height="2.6" fill="#909090"/><rect x="888.2" y="376.5" width="2.6" height="2.6" fill="#909090"/><rect x="896.2" y="376.5" width="2.6" height="2.6" fill="#909090"/><path d="M916.5 367.5H921L923.4 370V377.5H916.5Z" fill="#5e5e5e" stroke="#909090" stroke-width="1"/><rect x="912.4" y="373" width="6.6" height="6.6" fill="#9a9a9a"/><text x="864" y="378" font-family="Liberation Serif,serif" font-weight="bold" font-size="14.5" fill="#9a9a9a">T</text><rect x="946.5" y="366.5" width="8" height="15" rx="1.2" fill="#3c3c3c" stroke="#444" stroke-width="1"/><rect x="947.4" y="367.4" width="6.2" height="6" fill="#6c6c6c"/><path d="M941.6 400.6H947.6L944.6 404Z" fill="#e0e0e0"/><path d="M941.6 428.2H947.6L944.6 431.6Z" fill="#e0e0e0"/><rect x="763.4" y="425.4" width="3.5" height="3.5" fill="#a6a6a6"/><rect x="766.9" y="425.4" width="3.5" height="3.5" fill="#6c6c6c"/><rect x="770.4" y="425.4" width="3.5" height="3.5" fill="#a6a6a6"/><rect x="763.4" y="428.9" width="3.5" height="3.5" fill="#6c6c6c"/><rect x="766.9" y="428.9" width="3.5" height="3.5" fill="#a6a6a6"/><rect x="770.4" y="428.9" width="3.5" height="3.5" fill="#6c6c6c"/><rect x="763.4" y="432.4" width="3.5" height="3.5" fill="#a6a6a6"/><rect x="766.9" y="432.4" width="3.5" height="3.5" fill="#6c6c6c"/><rect x="770.4" y="432.4" width="3.5" height="3.5" fill="#a6a6a6"/><rect x="763.4" y="425.4" width="10.5" height="10.5" fill="none" stroke="#8c8c8c" stroke-width="0.8"/><path d="M799.4 422.8L792 431.4" stroke="#a6a6a6" stroke-width="1.8" stroke-linecap="round"/><path d="M792.6 430.4Q793.6 433.6 790.8 435Q787.6 436.4 783.8 435.2Q787.2 434.2 788.2 432Q790 429.6 792.6 430.4Z" fill="#a6a6a6"/><path d="M812.9 424.2V435.8M807 430H818.8" stroke="#a6a6a6" stroke-width="1.1"/><path d="M812.9 422.8L815.2 425.6H810.6ZM812.9 437.2L815.2 434.4H810.6ZM805.8 430L808.6 427.7V432.3ZM820 430L817.2 427.7V432.3Z" fill="#a6a6a6"/><path d="M832.2 429V426.6Q832.2 423.8 835.0 423.8Q837.8000000000001 423.8 837.8000000000001 426.6V429" stroke="#a6a6a6" stroke-width="1.6" fill="none"/><rect x="830.2" y="429" width="9.6" height="7.4" rx="0.8" fill="#a6a6a6"/><rect x="834.3000000000001" y="431.4" width="1.5" height="2.8" fill="#555"/><path d="M727.8 464.6Q734.2 457.6 740.6 464.6Q734.2 471.6 727.8 464.6Z" fill="#c2c2c2"/><circle cx="734.2" cy="464.2" r="2.7" fill="#3c3c3c"/><circle cx="733.4" cy="463.4" r="0.8" fill="#bbb"/><path d="M919.4 464.20000000000005V462.20000000000005Q919.4 459.40000000000003 922.0 459.40000000000003Q924.6 459.40000000000003 924.6 462.20000000000005V464.20000000000005" stroke="#dfe6ee" stroke-width="1.1" fill="none"/><rect x="917.5" y="464.5" width="9" height="6.6" fill="none" stroke="#dfe6ee" stroke-width="1.1"/><rect x="921.4" y="466.6" width="1.3" height="2.6" fill="#dfe6ee"/><rect x="756.4" y="640.8" width="8" height="6.4" rx="3.2" fill="none" stroke="#9a9a9a" stroke-width="1.4"/><rect x="762.4" y="640.8" width="8" height="6.4" rx="3.2" fill="none" stroke="#9a9a9a" stroke-width="1.4"/><path d="M760.6 644H766.2" stroke="#9a9a9a" stroke-width="1.4"/><rect x="810.5" y="639.5" width="13.4" height="10.6" fill="#c4c4c4" stroke="#c4c4c4"/><circle cx="817.2" cy="644.8" r="2.8" fill="#4a4a4a"/><circle cx="844" cy="645" r="5.4" fill="#c8c8c8"/><path d="M847.9 641.2A5.4 5.4 0 0 0 840.2 648.9Z" fill="#5a5a5a"/><circle cx="844" cy="645" r="5.4" fill="none" stroke="#c8c8c8" stroke-width="1.1"/><path d="M852 649.4H856.4L854.2 651.8Z" fill="#e4e4e4"/><path d="M864.6 639H869.4L870.6 640.6H877.6V650H864.6Z" fill="#c4c4c4"/><path d="M893.4 639.6H903V651H897.6V645H893.4Z" fill="#c4c4c4"/><path d="M891.6 646.4H896.4V651.2Z" fill="#c4c4c4"/><path d="M920.4 642.4H929.4L928.6 650.6H921.2Z" fill="none" stroke="#8a8a8a" stroke-width="1.1"/><path d="M919.4 641.2H930.4M923 641V639.4H926.8V641M923.2 643.6V649.4M925 643.6V649.4M926.8 643.6V649.4" stroke="#8a8a8a" stroke-width="1" fill="none"/></svg>
</div></body></html>
